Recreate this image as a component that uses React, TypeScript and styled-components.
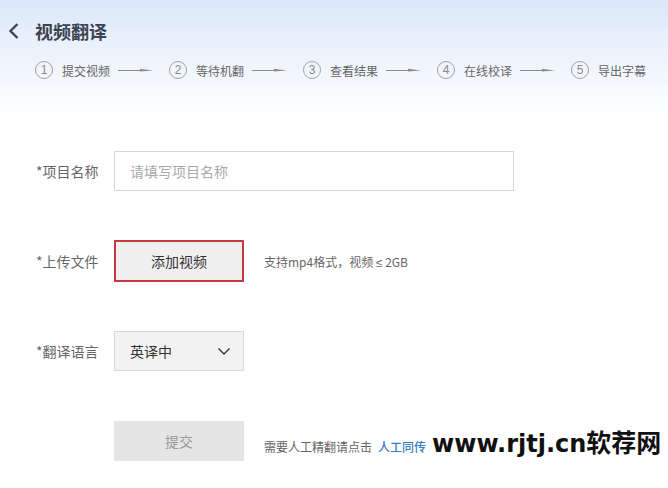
import React from "react";
import styled, { createGlobalStyle } from "styled-components";

const Global = createGlobalStyle`
  html, body { margin: 0; padding: 0; background: #fff; }
  body { font-family: "Noto Sans CJK SC", "Microsoft YaHei", sans-serif; }
  * { box-sizing: border-box; }
`;

const Page = styled.div`
  width: 668px;
  height: 488px;
  overflow: hidden;
  background: linear-gradient(180deg, #dbe8f8 0px, #eef4fc 60px, #ffffff 120px, #ffffff 100%);
`;

const Header = styled.div`
  display: flex;
  align-items: center;
  height: 32px;
  margin-top: 15px;
  padding-left: 8px;
`;

const BackBtn = styled.span`
  display: inline-flex;
  width: 14px;
  height: 18px;
  margin-right: 13px;
`;

const Title = styled.h1`
  margin: 0;
  font-size: 18px;
  font-weight: 700;
  color: #3c4250;
`;

const Steps = styled.div`
  display: flex;
  align-items: center;
  height: 22px;
  margin-top: 12px;
  padding-left: 35px;
`;

const Step = styled.div`
  display: flex;
  align-items: center;
`;

const Circle = styled.span`
  width: 18px;
  height: 18px;
  border: 1px solid #a3a3a3;
  border-radius: 50%;
  display: inline-flex;
  align-items: center;
  justify-content: center;
  font-family: "Liberation Sans", Arial, sans-serif;
  font-size: 12px;
  color: #8a8a8a;
  margin-right: 9px;
`;

const StepText = styled.span`
  font-size: 12px;
  color: #666;
  white-space: nowrap;
`;

const ArrowWrap = styled.span`
  display: inline-flex;
  margin: 0 16px 0 8px;
`;

const Form = styled.div`
  display: flex;
  flex-direction: column;
  gap: 50px;
  margin-top: 70px;
  padding-left: 36px;
`;

const Row = styled.div`
  display: flex;
  align-items: center;
  height: 40px;
`;

const Label = styled.span`
  width: 78px;
  font-size: 14px;
  color: #666;
  white-space: nowrap;
`;

const Input = styled.div`
  width: 400px;
  height: 40px;
  border: 1px solid #d6d6d6;
  background: #fff;
  display: flex;
  align-items: center;
  padding-left: 15px;
  font-size: 14px;
  color: #aaa;
`;

const Button = styled.div<{ $variant?: "upload" | "submit" | "select" }>`
  width: 130px;
  height: ${(p) => (p.$variant === "upload" ? "42px" : "40px")};
  display: flex;
  align-items: center;
  justify-content: ${(p) => (p.$variant === "select" ? "space-between" : "center")};
  padding: ${(p) => (p.$variant === "select" ? "0 12px 0 15px" : "0")};
  font-size: 14px;
  color: ${(p) => (p.$variant === "submit" ? "#9a9a9a" : "#333")};
  background: ${(p) =>
    p.$variant === "submit" ? "#e5e5e5" : p.$variant === "upload" ? "#f0f0f0" : "#f2f2f2"};
  border: ${(p) =>
    p.$variant === "upload"
      ? "2px solid #c6393e"
      : p.$variant === "select"
      ? "1px solid #d8d8d8"
      : "none"};
`;

const Hint = styled.span`
  margin-left: 20px;
  font-size: 12px;
  color: #666;
  white-space: nowrap;
`;

const Symbol = styled.span`
  font-family: "Liberation Sans", Arial, sans-serif;
`;

const Link = styled.span`
  margin-left: 6px;
  color: #3a7cc2;
  font-weight: 500;
`;

const Watermark = styled.span`
  margin-left: 6px;
  font-family: "DejaVu Sans", Verdana, "Noto Sans CJK SC", sans-serif;
  font-weight: 700;
  font-size: 24px;
  color: #111;
`;

const WatermarkCjk = styled.span`
  font-family: "Noto Sans CJK SC", sans-serif;
  font-weight: 700;
  font-size: 25px;
`;

const Arrow = () => (
  <ArrowWrap>
    <svg width="35" height="8" viewBox="0 0 35 8">
      <line x1="0" y1="4.5" x2="26" y2="4.5" stroke="#8c8c8c" strokeWidth="1" />
      <polygon points="22,2.8 35,4.5 22,5.6" fill="#8c8c8c" />
    </svg>
  </ArrowWrap>
);

const steps = ["提交视频", "等待机翻", "查看结果", "在线校译", "导出字幕"];

export default function App() {
  return (
    <Page>
      <Global />
      <Header>
        <BackBtn>
          <svg width="14" height="18" viewBox="0 0 14 18">
            <polyline points="9.5,2 2.5,9 9.5,16" fill="none" stroke="#3f4450" strokeWidth="2.4" />
          </svg>
        </BackBtn>
        <Title>视频翻译</Title>
      </Header>
      <Steps>
        {steps.map((s, i) => (
          <Step key={s}>
            <Circle>{i + 1}</Circle>
            <StepText>{s}</StepText>
            {i < steps.length - 1 && <Arrow />}
          </Step>
        ))}
      </Steps>
      <Form>
        <Row>
          <Label>*项目名称</Label>
          <Input>请填写项目名称</Input>
        </Row>
        <Row>
          <Label>*上传文件</Label>
          <Button $variant="upload">添加视频</Button>
          <Hint>
            支持mp4格式，视频 <Symbol>≤</Symbol> 2GB
          </Hint>
        </Row>
        <Row>
          <Label>*翻译语言</Label>
          <Button $variant="select">
            <span>英译中</span>
            <svg width="14" height="10" viewBox="0 0 14 10">
              <polyline points="1.5,2.5 7,8 12.5,2.5" fill="none" stroke="#333" strokeWidth="1.4" />
            </svg>
          </Button>
        </Row>
        <Row>
          <Label />
          <Button $variant="submit">提交</Button>
          <Hint>
            需要人工精翻请点击<Link>人工同传</Link>
            <Watermark>
              www.rjtj.cn<WatermarkCjk>软荐网</WatermarkCjk>
            </Watermark>
          </Hint>
        </Row>
      </Form>
    </Page>
  );
}
